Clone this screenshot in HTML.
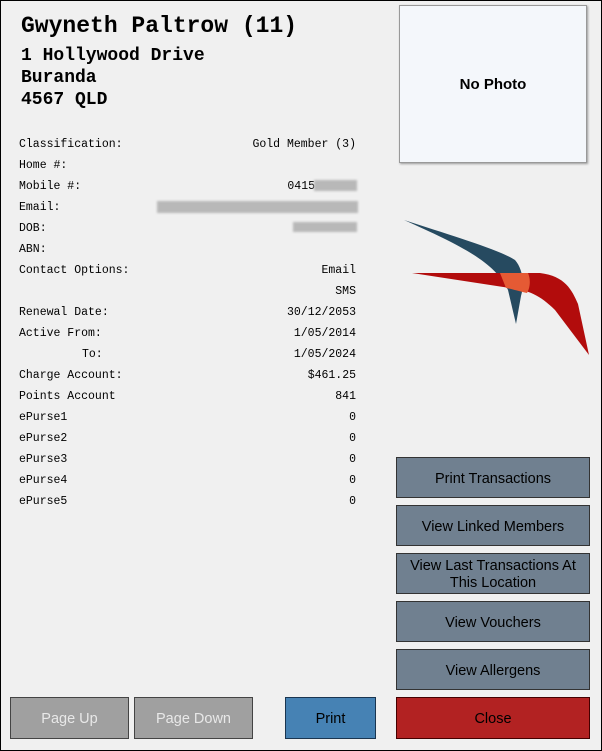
<!DOCTYPE html>
<html><head><style>
body{margin:0;width:602px;height:751px;overflow:hidden;background:#f0f0f0;font-family:"Liberation Mono",monospace;}
.frame{position:absolute;left:0;top:0;width:600px;height:749px;border:1px solid #000;}
.t{position:absolute;white-space:nowrap;color:#000;}
.h1{font-size:23px;font-weight:bold;left:21px;top:13px;}
.h2{font-size:18px;font-weight:bold;left:21px;}
.l{font-size:11.5px;left:19px;}
.r{font-size:11.5px;right:246px;text-align:right;}
.btn{position:absolute;box-sizing:border-box;border:1px solid #333;display:flex;align-items:center;justify-content:center;text-align:center;font-family:"Liberation Sans",sans-serif;font-size:14.5px;line-height:17px;padding-top:3px;}
.g{background:#708090;color:#000;left:396px;width:194px;height:41px;}
.blur{position:absolute;background:#b8b8b8;filter:blur(1px);}
</style></head><body>
<div class="frame"></div>
<div class="t h1">Gwyneth Paltrow (11)</div>
<div class="t h2" style="top:46px">1 Hollywood Drive</div>
<div class="t h2" style="top:68px">Buranda</div>
<div class="t h2" style="top:90px">4567 QLD</div>

<div class="t l" style="top:138px">Classification:</div><div class="t r" style="top:138px">Gold Member (3)</div>
<div class="t l" style="top:159px">Home #:</div>
<div class="t l" style="top:180px">Mobile #:</div><div class="t r" style="top:180px;right:287px">0415</div>
<div class="blur" style="left:314px;top:180px;width:43px;height:11px"></div>
<div class="t l" style="top:201px">Email:</div>
<div class="blur" style="left:157px;top:201px;width:201px;height:12px"></div>
<div class="t l" style="top:222px">DOB:</div>
<div class="blur" style="left:293px;top:222px;width:64px;height:10px"></div>
<div class="t l" style="top:243px">ABN:</div>
<div class="t l" style="top:264px">Contact Options:</div><div class="t r" style="top:264px">Email</div>
<div class="t r" style="top:285px">SMS</div>
<div class="t l" style="top:306px">Renewal Date:</div><div class="t r" style="top:306px">30/12/2053</div>
<div class="t l" style="top:327px">Active From:</div><div class="t r" style="top:327px">1/05/2014</div>
<div class="t l" style="top:348px;left:82px">To:</div><div class="t r" style="top:348px">1/05/2024</div>
<div class="t l" style="top:369px">Charge Account:</div><div class="t r" style="top:369px">$461.25</div>
<div class="t l" style="top:390px">Points Account</div><div class="t r" style="top:390px">841</div>
<div class="t l" style="top:411px">ePurse1</div><div class="t r" style="top:411px">0</div>
<div class="t l" style="top:432px">ePurse2</div><div class="t r" style="top:432px">0</div>
<div class="t l" style="top:453px">ePurse3</div><div class="t r" style="top:453px">0</div>
<div class="t l" style="top:474px">ePurse4</div><div class="t r" style="top:474px">0</div>
<div class="t l" style="top:495px">ePurse5</div><div class="t r" style="top:495px">0</div>

<div style="position:absolute;left:399px;top:5px;width:188px;height:158px;box-sizing:border-box;border:1px solid #999;background:#f4f7fb;box-shadow:1px 1px 2px #999;display:flex;align-items:center;justify-content:center;font-family:'Liberation Sans',sans-serif;font-weight:bold;font-size:15px">No Photo</div>

<svg style="position:absolute;left:390px;top:200px" width="212" height="170">
<path d="M14 20 C60 35 110 50 125 60 C132 68 135 82 131 96 L126 124 L118 90 C105 62 70 45 14 20 Z" fill="#264a60"/>
<path d="M22 73 L150 73 C175 76 182 90 188 104 L199 155 L165 110 C150 95 138 90 120 88 Z" fill="#b20c0c"/>
<path d="M110 73 L138 73 C141 80 140 88 137 93 C128 91 122 89 116 88 Z" fill="#e55a34"/>
</svg>

<div class="btn g" style="top:457px">Print Transactions</div>
<div class="btn g" style="top:505px">View Linked Members</div>
<div class="btn g" style="top:553px">View Last Transactions At<br>This Location</div>
<div class="btn g" style="top:601px">View Vouchers</div>
<div class="btn g" style="top:649px">View Allergens</div>

<div class="btn" style="left:10px;top:697px;width:119px;height:42px;background:#a0a0a0;color:#e8e8e8;border-color:#444">Page Up</div>
<div class="btn" style="left:134px;top:697px;width:119px;height:42px;background:#a0a0a0;color:#e8e8e8;border-color:#444">Page Down</div>
<div class="btn" style="left:285px;top:697px;width:91px;height:42px;background:#4682b4;border-color:#1a3550">Print</div>
<div class="btn" style="left:396px;top:697px;width:194px;height:42px;background:#b22222;border-color:#400">Close</div>
</body></html>
